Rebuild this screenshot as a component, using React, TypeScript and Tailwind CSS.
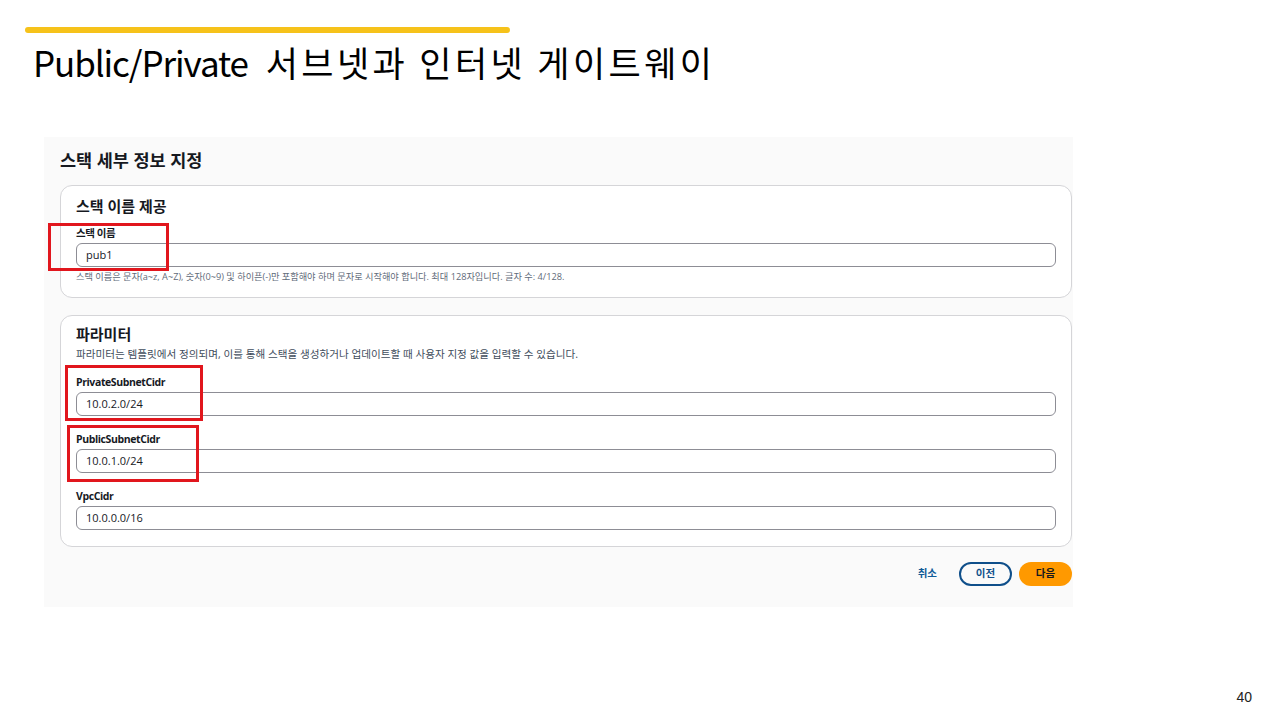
import React from 'react';

type Field = {
  label: string;
  value: string;
  mark?: string;
};

function Input({ value }: { value: string }) {
  return (
    <div className="h-[24px] w-full rounded-[6px] border border-[#8d8d95] bg-white pl-[9px] flex items-center text-[11px] text-[#16191f]">
      {value}
    </div>
  );
}

function FieldRow({ label, value, mark }: Field) {
  return (
    <div className="relative flex flex-col gap-[2px]">
      <div className="h-[16px] leading-[16px] text-[10.5px] tracking-[-0.4px] font-bold text-[#16191f]">{label}</div>
      <Input value={value} />
      {mark && <div className={`absolute border-[3px] border-[#e1161d] pointer-events-none ${mark}`} />}
    </div>
  );
}

export default function App() {
  const params: Field[] = [
    { label: 'PrivateSubnetCidr', value: '10.0.2.0/24', mark: 'left-[-11px] top-[-9px] w-[138px] h-[56px]' },
    { label: 'PublicSubnetCidr', value: '10.0.1.0/24', mark: 'left-[-9px] top-[-6px] w-[132px] h-[57px]' },
    { label: 'VpcCidr', value: '10.0.0.0/16' },
  ];

  return (
    <div className="w-[1280px] h-[720px] bg-white flex flex-col overflow-hidden font-['Open_Sans','Noto_Sans_CJK_KR',sans-serif]">
      {/* slide header */}
      <div className="pt-[27px] pl-[25px]">
        <div className="h-[6px] w-[485px] rounded-full bg-[#f6c21a]" />
      </div>
      <h1 className="ml-[33px] mt-[6px] h-[46px] leading-[46px] text-[35px] text-black font-['Noto_Sans_CJK_KR',sans-serif] font-normal whitespace-nowrap">
        <span className="tracking-[-1.1px]">Public/Private</span>{' '}
        <span className="pl-[10px] tracking-[3.4px]">서브넷과 인터넷 게이트웨이</span>
      </h1>

      {/* console capture */}
      <div className="ml-[44px] mt-[52px] w-[1029px] h-[470px] bg-[#fafafa] pl-[16px] pr-[1px] pt-[11px]">
        <div className="h-[24px] leading-[24px] text-[17.5px] font-bold text-[#16191f]">스택 세부 정보 지정</div>

        <div className="mt-[13px] h-[113px] rounded-[12px] border border-[#d5d5d8] bg-white pl-[15px] pr-[15px] pt-[9px]">
          <div className="h-[22px] leading-[22px] text-[15px] font-bold text-[#16191f]">스택 이름 제공</div>
          <div className="mt-[8px]">
            <FieldRow label="스택 이름" value="pub1" mark="left-[-28px] top-[-2px] w-[121px] h-[48px]" />
          </div>
          <div className="mt-[3px] h-[13px] leading-[13px] text-[9.2px] text-[#5f6b7a] whitespace-nowrap">
            스택 이름은 문자(a~z, A~Z), 숫자(0~9) 및 하이픈(-)만 포함해야 하며 문자로 시작해야 합니다. 최대 128자입니다. 글자 수: 4/128.
          </div>
        </div>

        <div className="mt-[17px] h-[232px] rounded-[12px] border border-[#d5d5d8] bg-white pl-[15px] pr-[15px] pt-[7px]">
          <div className="h-[22px] leading-[22px] text-[15px] font-bold text-[#16191f]">파라미터</div>
          <div className="mt-[2px] h-[14px] leading-[14px] text-[10.6px] text-[#414d5c] whitespace-nowrap">
            파라미터는 템플릿에서 정의되며, 이를 통해 스택을 생성하거나 업데이트할 때 사용자 지정 값을 입력할 수 있습니다.
          </div>
          <div className="mt-[13px] flex flex-col gap-[15px]">
            {params.map((p) => (
              <FieldRow key={p.label} {...p} />
            ))}
          </div>
        </div>

        <div className="mt-[15px] flex items-center justify-end gap-[7px]">
          <span className="mr-[15px] text-[10.5px] font-bold text-[#0f5b97]">취소</span>
          <div className="h-[24px] w-[53px] rounded-full border-2 border-[#0f4f8a] flex items-center justify-center text-[10.5px] font-bold text-[#0f4f8a]">
            이전
          </div>
          <div className="h-[24px] w-[53px] rounded-full bg-[#ff9900] flex items-center justify-center text-[10.5px] font-bold text-[#16191f]">
            다음
          </div>
        </div>
      </div>

      {/* page number */}
      <div className="mt-auto mb-[12px] mr-[28px] self-end text-[14px] text-[#222] font-['Liberation_Sans',sans-serif]">40</div>
    </div>
  );
}
